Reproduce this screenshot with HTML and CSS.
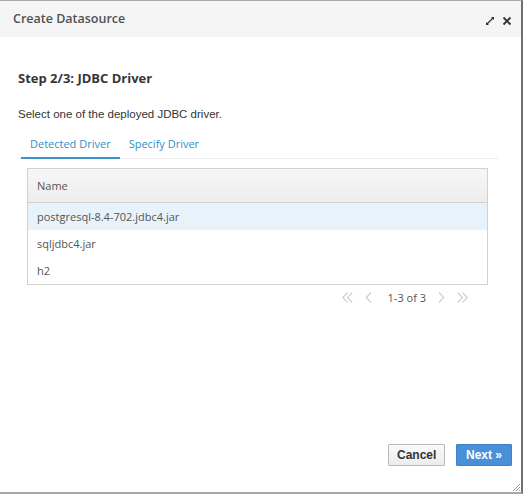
FILE: index.html
```html
<!DOCTYPE html>
<html>
<head>
<meta charset="utf-8">
<link rel="stylesheet" href="styles.css">
</head>
<body>
<div class="dialog">
  <div class="header">
    <span class="title">Create Datasource</span>
    <div class="header-icons">
      <svg class="icon" width="10" height="10" viewBox="0 0 10 10">
        <path d="M6 1h3v3z M4 9H1V6z" fill="#333"/>
        <path d="M8 2L2 8" stroke="#333" stroke-width="1.3"/>
      </svg>
      <svg class="icon" width="10" height="10" viewBox="0 0 10 10">
        <path d="M1.5 1.5L8.5 8.5M8.5 1.5L1.5 8.5" stroke="#333" stroke-width="1.8"/>
      </svg>
    </div>
  </div>
  <div class="body">
    <h2 class="step">Step 2/3: JDBC Driver</h2>
    <p class="desc">Select one of the deployed JDBC driver.</p>
    <div class="tabs">
      <span class="tab active">Detected Driver</span>
      <span class="tab">Specify Driver</span>
    </div>
    <div class="table">
      <div class="thead">Name</div>
      <div class="row selected">postgresql-8.4-702.jdbc4.jar</div>
      <div class="row">sqljdbc4.jar</div>
      <div class="row">h2</div>
    </div>
    <div class="pager">
      <svg class="pg" width="11" height="11" viewBox="0 0 11 11"><path d="M5.5 0.5L0.8 5.5L5.5 10.5M10.2 0.5L5.5 5.5L10.2 10.5" fill="none" stroke="#cdcdcd" stroke-width="1.1"/></svg>
      <svg class="pg" width="7" height="11" viewBox="0 0 7 11"><path d="M6 0.5L1.2 5.5L6 10.5" fill="none" stroke="#cdcdcd" stroke-width="1.1"/></svg>
      <span class="pg-text">1-3 of 3</span>
      <svg class="pg" width="7" height="11" viewBox="0 0 7 11"><path d="M1 0.5L5.8 5.5L1 10.5" fill="none" stroke="#cdcdcd" stroke-width="1.1"/></svg>
      <svg class="pg" width="11" height="11" viewBox="0 0 11 11"><path d="M0.8 0.5L5.5 5.5L0.8 10.5M5.5 0.5L10.2 5.5L5.5 10.5" fill="none" stroke="#cdcdcd" stroke-width="1.1"/></svg>
    </div>
    <div class="spacer"></div>
    <div class="footer">
      <button class="btn cancel">Cancel</button>
      <button class="btn next">Next »</button>
    </div>
  </div>
  <svg class="grip" width="10" height="10" viewBox="0 0 10 10">
    <path d="M9 2L2 9M9 5L5 9M9 8L8 9" stroke="#999" stroke-width="1"/>
  </svg>
</div>
</body>
</html>
```
FILE: styles.css
```css
html, body {
  margin: 0;
  padding: 0;
  background: #fff;
}
.dialog {
  position: relative;
  width: 521px;
  height: 491px;
  border-top: 1px solid #a8a8a8;
  border-bottom: 2px solid #a8a8a8;
  border-right: 2px solid #6f6f6f;
  display: flex;
  flex-direction: column;
  background: #fff;
}
.header {
  height: 36px;
  background: #f5f5f5;
  display: flex;
  align-items: center;
  justify-content: space-between;
  padding: 0 9px 0 13px;
}
.title {
  font-family: "Open Sans", sans-serif;
  font-size: 12.5px;
  color: #4d5258;
  font-weight: 600;
  margin-top: -2px;
}
.header-icons {
  display: flex;
  gap: 7px;
  align-items: center;
  margin-top: 4px;
}
.body {
  flex: 1;
  display: flex;
  flex-direction: column;
  padding: 0 9px 26px 18px;
}
.step {
  font-family: "Open Sans", sans-serif;
  font-size: 13px;
  font-weight: 700;
  color: #363636;
  margin: 32px 0 0;
  line-height: 18px;
}
.desc {
  font-family: "Liberation Sans", Arial, sans-serif;
  font-size: 11.5px;
  color: #333;
  margin: 20px 0 0;
  line-height: 14px;
}
.tabs {
  margin-top: 8px;
  margin-right: 14px;
  display: flex;
  border-bottom: 1px solid #ededed;
  padding-left: 3px;
}
.tab {
  font-family: "Open Sans", sans-serif;
  font-size: 11px;
  color: #2f8fc7;
  padding: 7px 9px 6px 9px;
  line-height: 15px;
}
.tab.active {
  border-bottom: 2px solid #3a93c9;
  margin-bottom: -1px;
}
.table {
  margin: 9px 24px 0 9px;
  border: 1px solid #d1d1d1;
  font-family: "Open Sans", sans-serif;
  font-size: 11px;
  color: #555;
}
.thead {
  height: 33px;
  line-height: 33px;
  padding-left: 9px;
  background: linear-gradient(#f7f7f7, #ededed);
  border-bottom: 1px solid #d1d1d1;
}
.row {
  height: 27px;
  line-height: 27px;
  padding-left: 9px;
}
.row.selected {
  background: #e8f2fa;
}
.pager {
  display: flex;
  justify-content: flex-end;
  align-items: center;
  gap: 12px;
  margin: 4px 44px 0 0;
  font-family: "Open Sans", sans-serif;
  font-size: 11px;
  height: 16px;
}
.pg-text {
  color: #555;
  margin: 0 0 0 4px;
}
.spacer {
  flex: 1;
}
.footer {
  display: flex;
  justify-content: flex-end;
  gap: 11px;
}
.btn {
  font-family: "Liberation Sans", Arial, sans-serif;
  font-size: 12px;
  height: 22px;
  padding: 0 8px;
  border-radius: 1px;
  cursor: pointer;
}
.cancel {
  background: linear-gradient(#fafafa, #ececec);
  border: 1px solid #b9b9b9;
  color: #333;
  font-weight: 700;
  width: 57px;
}
.next {
  background: #4a90d9;
  border: 1px solid #3d82c7;
  color: #fff;
  font-weight: 700;
  width: 56px;
}
.grip {
  position: absolute;
  right: 0;
  bottom: 0;
}
```
